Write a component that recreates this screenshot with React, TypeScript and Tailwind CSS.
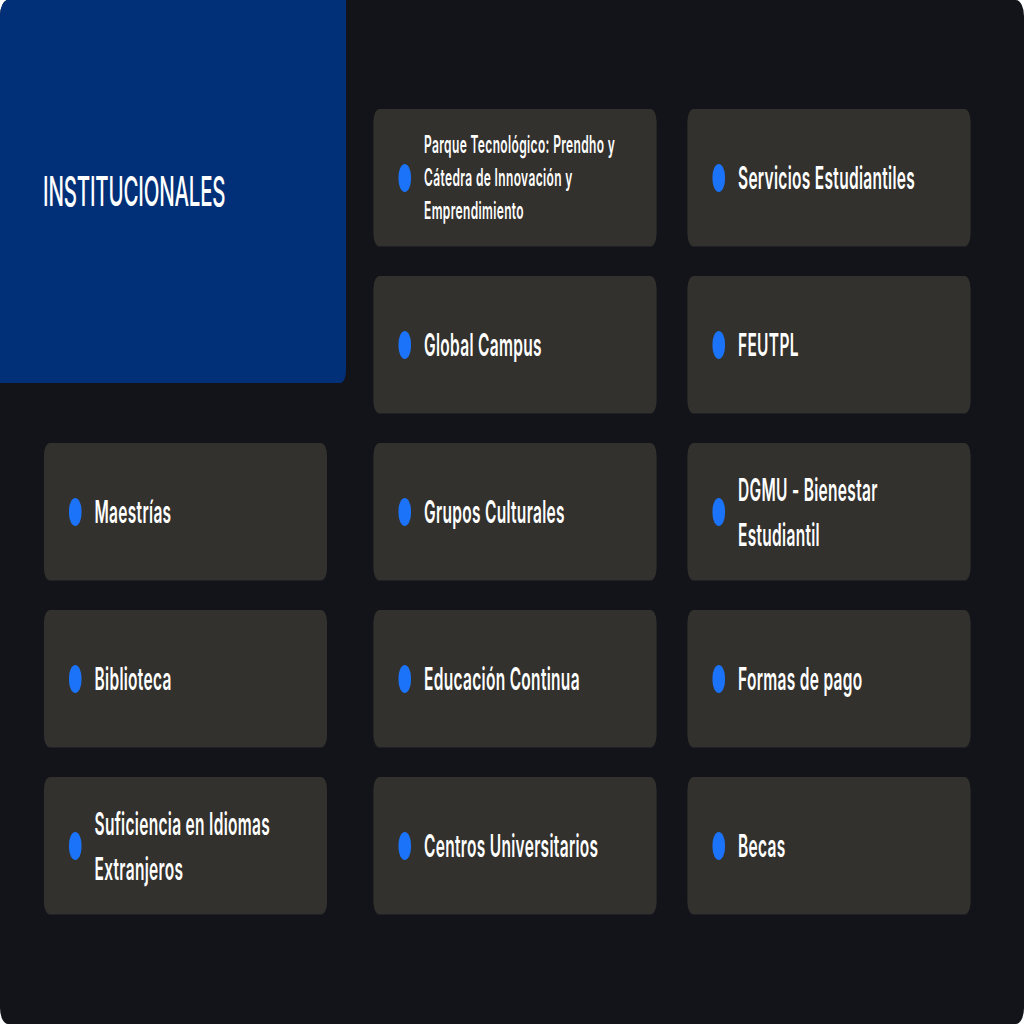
import React from 'react';

type Item = { label: string; small?: boolean };

const leftItems: Item[] = [
    { label: 'Maestrías' },
    { label: 'Biblioteca' },
    { label: 'Suficiencia en Idiomas Extranjeros' },
];

const gridItems: Item[] = [
    { label: 'Parque Tecnológico: Prendho y Cátedra de Innovación y Emprendimiento', small: true },
    { label: 'Servicios Estudiantiles' },
    { label: 'Global Campus' },
    { label: 'FEUTPL' },
    { label: 'Grupos Culturales' },
    { label: 'DGMU - Bienestar Estudiantil' },
    { label: 'Educación Continua' },
    { label: 'Formas de pago' },
    { label: 'Centros Universitarios' },
    { label: 'Becas' },
];

const LinkCard: React.FC<{ item: Item }> = ({ item }) => (
    <div className="h-[137px] w-[566px] rounded-xl bg-[#33312d] shadow-[0_1px_0_rgba(255,255,255,0.06)] flex items-center pl-[50px] pr-[40px]">
        <span className="w-[25px] h-[28px] rounded-full bg-[#1a73f8] shrink-0"></span>
        <p
            className={`ml-[26px] font-semibold text-white ${
                item.small
                    ? 'text-[24px] leading-[33px] tracking-[0.03em]'
                    : 'text-[31px] leading-[45px] tracking-[0.02em]'
            }`}
        >
            {item.label}
        </p>
    </div>
);

const App: React.FC = () => {
    return (
        <div className="w-[1024px] h-[1024px] overflow-hidden bg-white">
            {/* the whole panel is drawn wide and squeezed horizontally */}
            <div className="w-[2048px] h-[1024px] origin-top-left scale-x-50">
                <div className="w-full h-full rounded-2xl bg-[#131419] overflow-hidden flex font-['Inter','Noto_Sans',sans-serif]">
                    <div className="w-[692px] flex flex-col shrink-0">
                        <div className="h-[383px] bg-[#012f78] rounded-br-xl flex items-center pl-[86px]">
                            <h1 className="text-[41px] font-medium text-white tracking-[-0.01em]">INSTITUCIONALES</h1>
                        </div>
                        <div className="mt-[60px] pl-[88px] flex flex-col gap-[30px]">
                            {leftItems.map(item => (
                                <LinkCard key={item.label} item={item} />
                            ))}
                        </div>
                    </div>
                    <div className="pl-[55px] pt-[109px]">
                        <div className="grid grid-cols-[566px_566px] gap-x-[62px] gap-y-[30px]">
                            {gridItems.map(item => (
                                <LinkCard key={item.label} item={item} />
                            ))}
                        </div>
                    </div>
                </div>
            </div>
        </div>
    );
};

export default App;
